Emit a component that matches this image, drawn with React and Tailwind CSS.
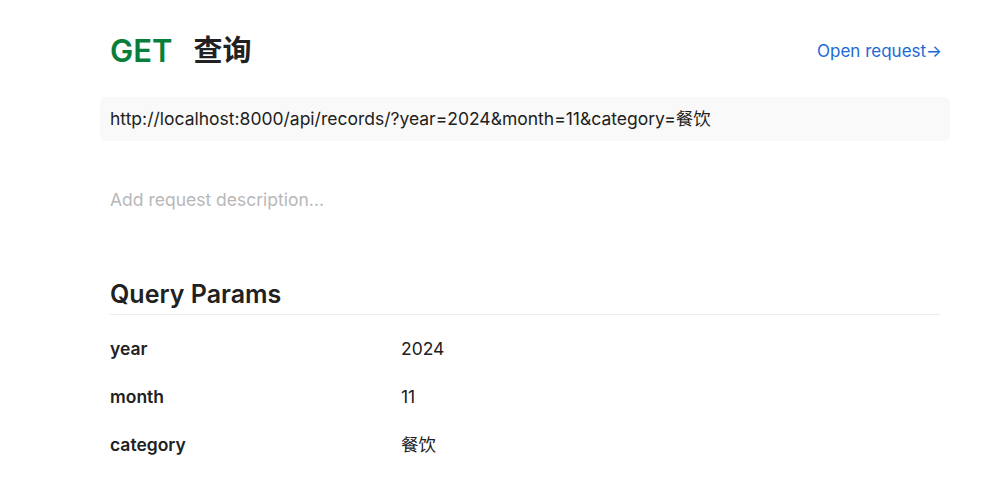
export default function App() {
  const params = [
    { key: "year", value: "2024" },
    { key: "month", value: "11" },
    { key: "category", value: "餐饮" },
  ];

  return (
    <div
      className="min-h-screen bg-white text-[#212121]"
      style={{ fontFamily: 'Inter, "Noto Sans CJK SC", sans-serif' }}
    >
      <div className="ml-[100px] w-[850px] pt-[32px]">
        {/* Header */}
        <div className="flex items-center justify-between px-[10px] h-[38px]">
          <h1 className="flex items-center text-[31px] font-semibold leading-[38px]">
            <span className="text-[#097d3a]">GET</span>
            <span className="ml-[21px] text-[29px] font-bold">查询</span>
          </h1>
          <a className="text-[17px] text-[#1c6ad6] leading-[26px] -mr-[2px]" href="#">
            Open request→
          </a>
        </div>

        {/* URL */}
        <div className="mt-[27px] h-[44px] rounded-[6px] bg-[#f9f9f9] px-[10px] flex items-center text-[17.5px]">
          http://localhost:8000/api/records/?year=2024&amp;month=11&amp;category=餐饮
        </div>

        {/* Description */}
        <div className="mt-[46px] px-[10px] text-[17.5px] leading-[26px] text-[#b8b8b8]">
          Add request description...
        </div>

        {/* Query Params */}
        <div className="mt-[64px] px-[10px]">
          <h2 className="text-[25px] font-semibold leading-[34px] pb-[3px] border-b border-[#ebebeb]">
            Query Params
          </h2>
          <div className="pt-[10px]">
            {params.map((p) => (
              <div key={p.key} className="flex items-center h-[48px] text-[17.5px]">
                <div className="w-[291px] font-semibold">{p.key}</div>
                <div>{p.value}</div>
              </div>
            ))}
          </div>
        </div>
      </div>
    </div>
  );
}
